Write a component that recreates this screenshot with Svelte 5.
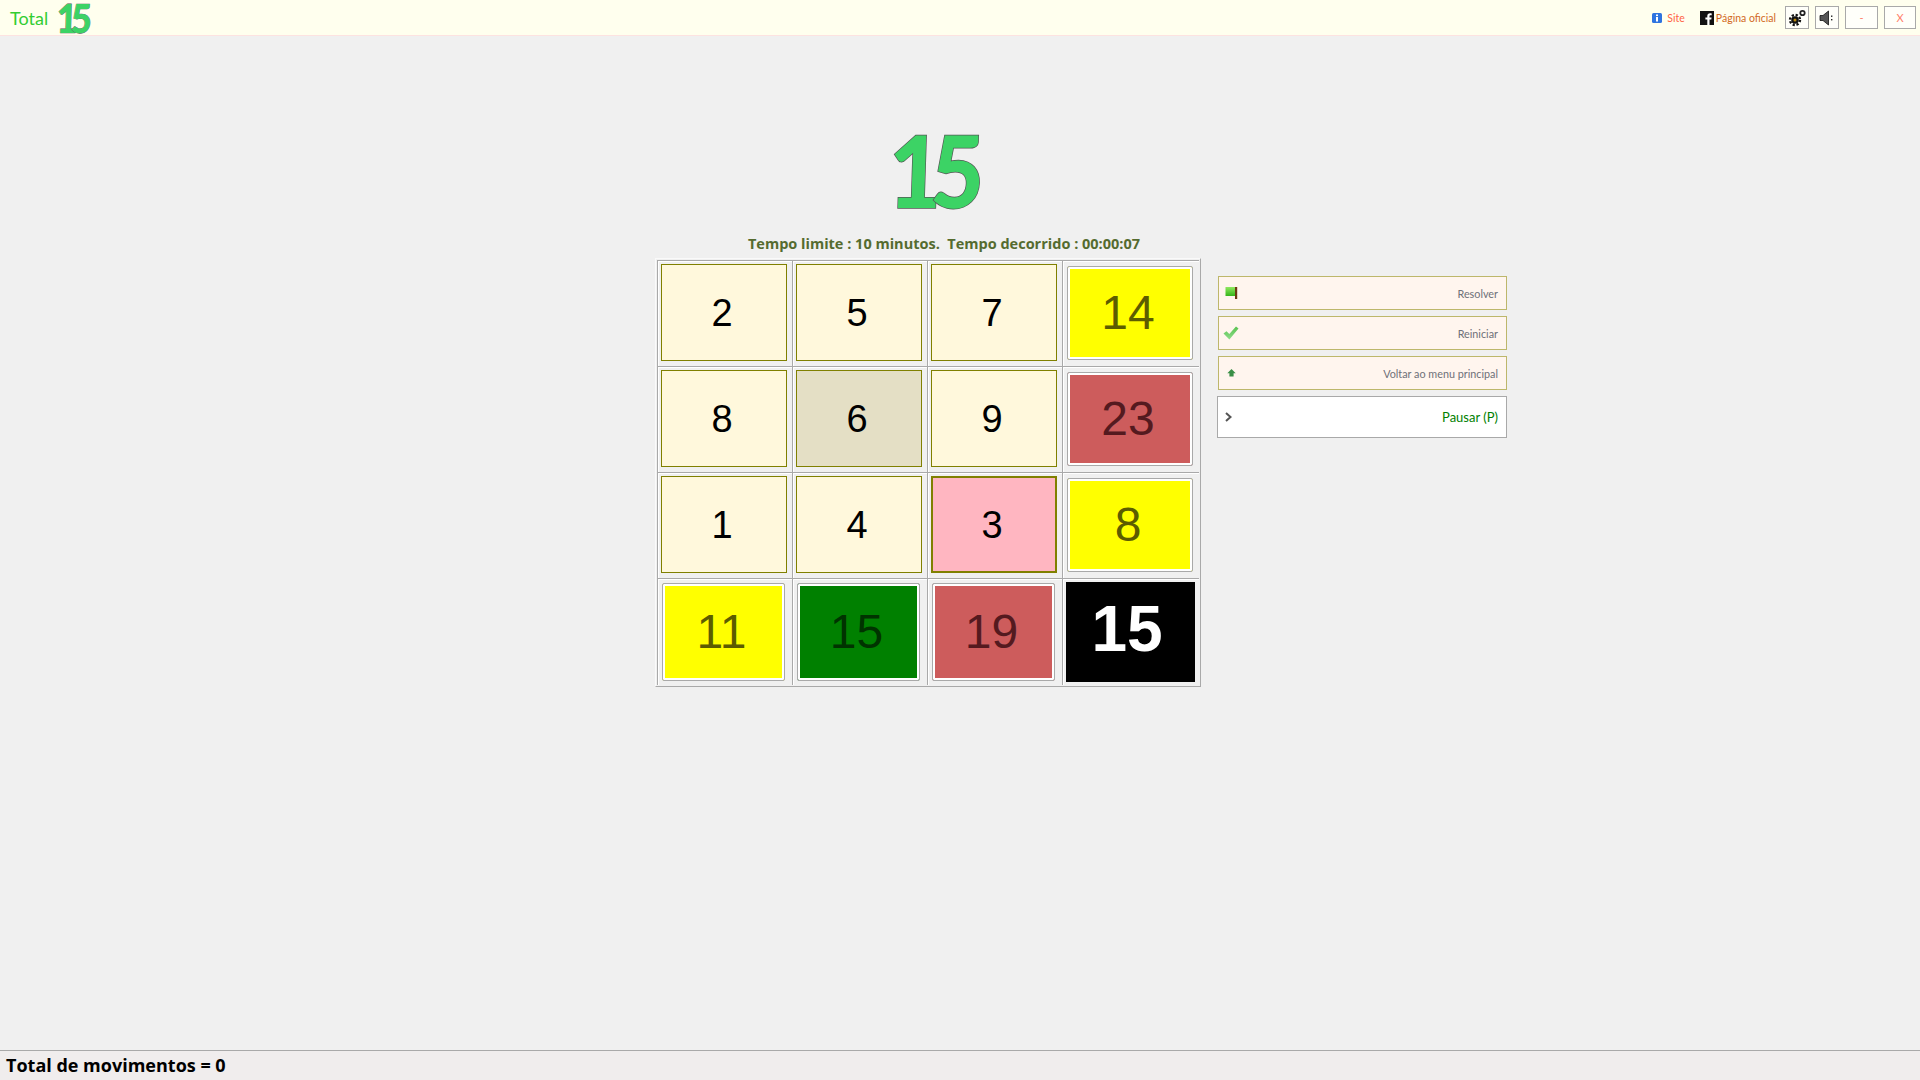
<script>
	const tiles = [
		{ n: 2, kind: 'plain' }, { n: 5, kind: 'plain' }, { n: 7, kind: 'plain' }, { n: 14, kind: 'yellow' },
		{ n: 8, kind: 'plain' }, { n: 6, kind: 'pressed' }, { n: 9, kind: 'plain' }, { n: 23, kind: 'red' },
		{ n: 1, kind: 'plain' }, { n: 4, kind: 'plain' }, { n: 3, kind: 'pink' }, { n: 8, kind: 'yellow' },
		{ n: 11, kind: 'yellow low' }, { n: 15, kind: 'green low' }, { n: 19, kind: 'red low' }, { n: 15, kind: 'black' }
	];
</script>

<div class="page">
	<header class="topbar">
		<div class="brand">
			<span class="total">Total</span>
			<span class="logo small"><span>1</span><span>5</span></span>
		</div>
		<div class="actions">
			<a class="link site" href="#site">
				<svg width="10" height="10" viewBox="0 0 10 10"><rect width="10" height="10" rx="1.5" fill="#2f74e0" /><rect x="4" y="1.5" width="2" height="1.6" fill="#fff" /><rect x="4" y="4" width="2" height="4.5" fill="#fff" /></svg>
				Site
			</a>
			<a class="link official" href="#fb">
				<svg width="14" height="14" viewBox="0 0 14 14"><rect width="14" height="14" fill="#111" /><path d="M9.5 14V8.600h1.800l.3-2.100H9.500V5.300c0-.6.2-1 1-1h1.200V2.400c-.3 0-.9-.1-1.600-.1-1.700 0-2.800 1-2.800 2.800v1.400H5.400v2.100h1.900V14z" fill="#fff" /></svg>
				Página oficial
			</a>
			<button class="win square" aria-label="Configurar">
				<svg width="20" height="20" viewBox="0 0 20 20">
					<circle cx="8" cy="12" r="3.800" fill="#111" />
					<circle cx="8" cy="12" r="5" fill="none" stroke="#111" stroke-width="2.400" stroke-dasharray="2.200 1.730" />
					<circle cx="8" cy="12" r="1.500" fill="#b8860b" />
					<circle cx="15.500" cy="5" r="2.200" fill="none" stroke="#222" stroke-width="1.800" />
				</svg>
			</button>
			<button class="win square" aria-label="Som">
				<svg width="16" height="18" viewBox="0 0 16 18">
					<path d="M1 6.500h3L9.500 2v14L4 11.500H1z" fill="#555" stroke="#111" stroke-width=".8" />
					<rect x="12" y="6.500" width="1.400" height="1.400" fill="#222" />
					<rect x="12" y="10" width="1.400" height="1.400" fill="#222" />
				</svg>
			</button>
			<button class="win wide">-</button>
			<button class="win wide last">X</button>
		</div>
	</header>

	<main class="main">
		<div class="head">
			<div class="logo-row"><span class="logo big"><span>1</span><span>5</span></span></div>
			<p class="status">Tempo limite : 10 minutos.&nbsp; Tempo decorrido : 00:00:07</p>
		</div>
		<div class="game">
			<div class="board">
				{#each tiles as tile}
					<div class="cell">
						<div class="tile {tile.kind}"><span>{tile.n}</span></div>
					</div>
				{/each}
			</div>
			<div class="side">
				<button class="cmd">
					<svg width="14" height="14" viewBox="0 0 14 14">
						<defs>
							<linearGradient id="flag" x1="0" y1="0" x2="0" y2="1"><stop offset="0" stop-color="#8fe85f" /><stop offset="1" stop-color="#35b51a" /></linearGradient>
						</defs>
						<rect x=".5" y="1" width="9.500" height="9" fill="url(#flag)" />
						<rect x="10" y="1" width="2.200" height="12" fill="#6b3a12" />
					</svg>
					Resolver
				</button>
				<button class="cmd check">
					<svg width="16" height="14" viewBox="0 0 16 14">
						<defs>
							<linearGradient id="tick" x1="0" y1="0" x2="0" y2="1"><stop offset="0" stop-color="#57c24f" /><stop offset="1" stop-color="#8fdc8a" /></linearGradient>
						</defs>
						<path d="M.5 7.500l3-2.300 2.800 2.800L13 .5l2.500 2L6.400 13.500z" fill="url(#tick)" />
					</svg>
					Reiniciar
				</button>
				<button class="cmd">
					<svg width="14" height="14" viewBox="0 0 14 14"><path d="M6.500 3l4.200 4.300H8.600v3.300H4.400V7.300H2.300z" fill="#3a8f46" /></svg>
					Voltar ao menu principal
				</button>
				<button class="pause">
					<svg width="10" height="12" viewBox="0 0 10 12"><path d="M2 2l4.500 4L2 10" fill="none" stroke="#555" stroke-width="2" /></svg>
					Pausar (P)
				</button>
			</div>
		</div>
	</main>

	<footer class="foot">Total de movimentos = 0</footer>
</div>

<style>
	:global(body) {
		background: #f0f0f0;
		overflow: hidden;
	}
	.page {
		display: flex;
		flex-direction: column;
		height: 100vh;
		background: #f0f0f0;
	}

	.topbar {
		display: flex;
		justify-content: space-between;
		align-items: center;
		height: 35px;
		background: #ffffee;
		border-bottom: 1px solid #fde3e1;
		flex-shrink: 0;
	}
	.brand {
		display: flex;
		align-items: center;
		gap: 7px;
		padding-left: 10px;
	}
	.total {
		font: 18px Lato, sans-serif;
		color: #32cd32;
	}
	.actions {
		display: flex;
		align-items: center;
		padding-right: 4px;
	}
	.link {
		display: flex;
		align-items: center;
		font: 10.5px Lato, sans-serif;
		text-decoration: none;
	}
	.site {
		gap: 5px;
		color: #ff6347;
		margin-right: 15px;
	}
	.official {
		gap: 2px;
		color: #d2691e;
		margin-right: 9px;
	}
	.win {
		display: flex;
		align-items: center;
		justify-content: center;
		height: 23px;
		padding: 0;
		background: #fffffa;
		border: 1px solid #a9a9a9;
		color: #ff7f6a;
		font: 11px Lato, sans-serif;
	}
	.square {
		width: 24px;
		margin-right: 6px;
	}
	.wide {
		width: 33px;
		margin-right: 6px;
	}
	.last {
		width: 32px;
		margin-right: 0;
	}

	.main {
		flex: 1;
		padding-left: 655px;
	}
	.head {
		width: 578px;
		padding-top: 83px;
	}
	.logo-row {
		display: flex;
		justify-content: center;
		padding-right: 26px;
		height: 115px;
	}
	.logo {
		display: inline-flex;
		font-family: Lato, sans-serif;
		font-weight: 900;
		color: #3cd365;
		-webkit-text-stroke: 1.5px #555;
		paint-order: stroke fill;
	}
	.logo span {
		display: block;
		transform: skewX(-2deg);
	}
	.big {
		font-size: 100px;
		line-height: 100px;
		height: 100px;
		letter-spacing: -12px;
		transform: scaleX(0.92);
	}
	.small {
		font-size: 40px;
		line-height: 34px;
		letter-spacing: -7px;
		transform: scaleX(0.9);
		-webkit-text-stroke-width: 0.7px;
	}
	.status {
		margin: 0;
		height: 24px;
		text-align: center;
		font: bold 14.5px "Open Sans", sans-serif;
		line-height: 20px;
		color: #556b2f;
	}

	.game {
		display: flex;
		align-items: flex-start;
		gap: 16px;
	}
	.board {
		display: grid;
		grid-template-columns: 135px 135px 135px 137px;
		grid-template-rows: 106px 106px 106px 107px;
		padding: 1px;
		background: #f0f0f0;
		border: 1px solid #a9a9a9;
		border-top-color: #fafafa;
		border-left-color: #fafafa;
	}
	.cell {
		box-sizing: border-box;
		padding: 3px 0 0 3px;
		border-top: 1px solid #a9a9a9;
		border-left: 1px solid #a9a9a9;
		box-shadow: inset 1px 1px 0 #fff;
	}
	.tile {
		box-sizing: border-box;
		display: flex;
		align-items: center;
		justify-content: center;
		width: 126px;
		height: 97px;
		padding: 1px 4px 0 0;
		font: 38px "Liberation Sans", sans-serif;
		color: #000;
		background: #fff8dc;
		border: 1px solid #808000;
	}
	.pressed {
		background: #e4dfc5;
	}
	.pink {
		background: #ffb6c1;
		border-width: 2px;
	}
	.yellow,
	.red,
	.green {
		height: 94px;
		margin: 2px 0 0 1px;
		padding: 0 4px 1px 0;
		border: 1px solid #a9a9a9;
		border-radius: 2px;
		box-shadow: inset 0 0 0 2px #fff;
		font-size: 48px;
	}
	.yellow {
		background: #ffff00;
		color: #5c5c00;
	}
	.red {
		background: #cd5c5c;
		color: #541a1f;
	}
	.green {
		background: #008000;
		color: #003300;
	}
	.low {
		width: 123px;
		height: 98px;
		margin: 1px 0 0 1px;
	}
	.black {
		width: 129px;
		height: 100px;
		margin: 0;
		background: #000;
		color: #fff;
		border: 0;
		font-weight: bold;
		font-size: 64px;
		padding: 0 7px 6px 0;
	}

	.side {
		display: flex;
		flex-direction: column;
		gap: 6px;
		width: 290px;
		padding-top: 18px;
	}
	.cmd,
	.pause {
		box-sizing: border-box;
		display: flex;
		align-items: center;
		justify-content: space-between;
		font: 10.8px Lato, sans-serif;
		padding: 0 8px 0 6px;
	}
	.cmd {
		height: 34px;
		margin-left: 1px;
		background: #fff5ee;
		border: 1px solid #bdb76b;
		color: #6e7078;
	}
	.check {
		padding-left: 4px;
	}
	.pause {
		height: 42px;
		background: #fff;
		border: 1px solid #a9a9a9;
		color: #008000;
		font-size: 13px;
	}

	.foot {
		box-sizing: border-box;
		height: 30px;
		flex-shrink: 0;
		padding-left: 6px;
		background: #f0eded;
		border-top: 1px solid #a9a9a9;
		font: bold 18px "Open Sans", sans-serif;
		line-height: 28px;
		color: #000;
	}
</style>
